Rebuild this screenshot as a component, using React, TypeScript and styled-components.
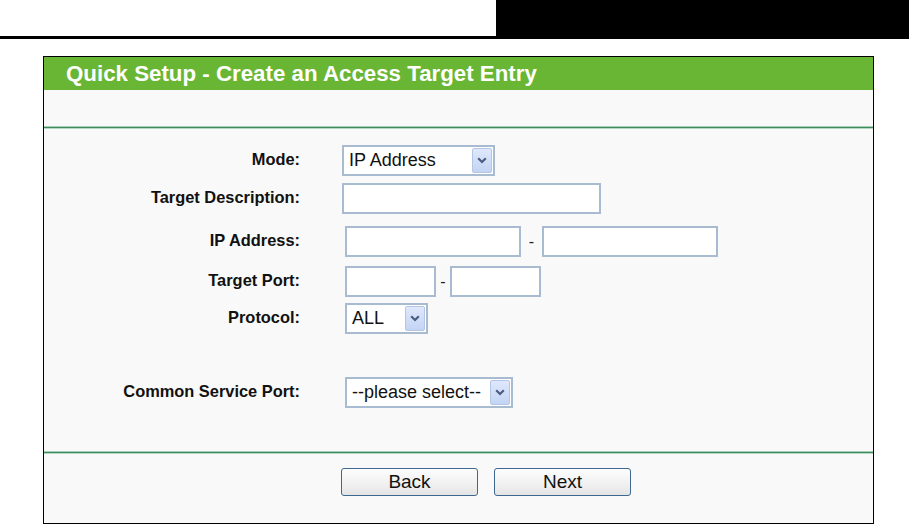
import React from "react";
import styled, { createGlobalStyle } from "styled-components";

const Global = createGlobalStyle`
  html, body { margin: 0; padding: 0; background: #ffffff; }
  body { font-family: "Liberation Sans", Arial, sans-serif; overflow: hidden; }
`;

const TopBar = styled.div`
  display: flex;
  height: 39px;
`;

const TopLeft = styled.div`
  width: 496px;
  height: 36px;
  border-bottom: 3px solid #000;
`;

const TopRight = styled.div`
  flex: 1;
  background: #000;
`;

const Panel = styled.div`
  margin: 17px 0 0 43px;
  width: 829px;
  height: 466px;
  border: 1px solid #000;
  background: #f9f9f9;
  display: flex;
  flex-direction: column;
`;

const TitleBar = styled.div`
  height: 33px;
  background: #69b634;
  color: #ffffff;
  font-weight: bold;
  font-size: 22.3px;
  line-height: 33px;
  padding-left: 22px;
  white-space: nowrap;
`;

const Spacer = styled.div`
  height: 36px;
`;

const Separator = styled.div`
  height: 3px;
  background: linear-gradient(#a6cfb6 0, #a6cfb6 1px, #3f8a5f 1px, #3f8a5f 2px, #b5d8c2 2px);
`;

const Form = styled.div`
  padding-top: 16px;
  height: 306px;
  display: flex;
  flex-direction: column;
`;

const Row = styled.div<{ $top: number }>`
  display: grid;
  grid-template-columns: 256px 1fr;
  column-gap: 42px;
  height: 31px;
  margin-top: ${(p) => p.$top}px;
  align-items: center;
`;

const Label = styled.div`
  text-align: right;
  font-weight: bold;
  font-size: 16.4px;
  color: #111;
  padding-bottom: 2px;
  white-space: nowrap;
`;

const Controls = styled.div<{ $inset?: number }>`
  display: flex;
  align-items: center;
  padding-left: ${(p) => p.$inset ?? 0}px;
  height: 31px;
`;

const TextBox = styled.div<{ $w: number }>`
  box-sizing: border-box;
  width: ${(p) => p.$w}px;
  height: 31px;
  border: 2px solid #a9bbd1;
  background: #ffffff;
`;

const Dash = styled.span<{ $w: number }>`
  width: ${(p) => p.$w}px;
  text-align: center;
  font-size: 16px;
  color: #222;
`;

const SelectBox = styled.div<{ $w: number }>`
  box-sizing: border-box;
  width: ${(p) => p.$w}px;
  height: 31px;
  border: 2px solid #a9bbd1;
  background: #ffffff;
  display: flex;
  align-items: center;
  justify-content: space-between;
  padding: 0 1px 0 5px;
  font-size: 18px;
  color: #111;
  white-space: nowrap;
`;

const DropButton = styled.div`
  box-sizing: border-box;
  flex: none;
  width: 20px;
  height: 25px;
  border: 1px solid #b4c6e6;
  border-radius: 2px;
  background: linear-gradient(#dfe8fb, #c3d4f4);
  display: flex;
  align-items: center;
  justify-content: center;
`;

const ButtonBar = styled.div`
  display: flex;
  gap: 16px;
  padding: 14px 0 0 297px;
`;

const Btn = styled.button`
  box-sizing: border-box;
  width: 137px;
  height: 28px;
  border: 1px solid #3e6890;
  border-radius: 3px;
  background: linear-gradient(#fdfdfd, #f0f0f0 60%, #e4e4e4);
  font-family: "Liberation Sans", Arial, sans-serif;
  font-size: 19px;
  line-height: 26px;
  color: #111;
  padding: 0;
`;

const Chevron = () => (
  <svg width="10" height="7" viewBox="0 0 10 7">
    <path d="M1.2 1.3 L5 5 L8.8 1.3" fill="none" stroke="#4b5d80" strokeWidth="2.2" />
  </svg>
);

const Select = ({ w, value }: { w: number; value: string }) => (
  <SelectBox $w={w}>
    <span>{value}</span>
    <DropButton>
      <Chevron />
    </DropButton>
  </SelectBox>
);

export default function App() {
  return (
    <>
      <Global />
      <TopBar>
        <TopLeft />
        <TopRight />
      </TopBar>
      <Panel>
        <TitleBar>Quick Setup - Create an Access Target Entry</TitleBar>
        <Spacer />
        <Separator />
        <Form>
          <Row $top={0}>
            <Label>Mode:</Label>
            <Controls>
              <Select w={153} value="IP Address" />
            </Controls>
          </Row>
          <Row $top={7}>
            <Label>Target Description:</Label>
            <Controls>
              <TextBox $w={259} />
            </Controls>
          </Row>
          <Row $top={12}>
            <Label>IP Address:</Label>
            <Controls $inset={3}>
              <TextBox $w={176} />
              <Dash $w={21}>-</Dash>
              <TextBox $w={176} />
            </Controls>
          </Row>
          <Row $top={9}>
            <Label>Target Port:</Label>
            <Controls $inset={3}>
              <TextBox $w={91} />
              <Dash $w={14}>-</Dash>
              <TextBox $w={91} />
            </Controls>
          </Row>
          <Row $top={6}>
            <Label>Protocol:</Label>
            <Controls $inset={3}>
              <Select w={83} value="ALL" />
            </Controls>
          </Row>
          <Row $top={43}>
            <Label>Common Service Port:</Label>
            <Controls $inset={3}>
              <Select w={168} value="--please select--" />
            </Controls>
          </Row>
        </Form>
        <Separator />
        <ButtonBar>
          <Btn>Back</Btn>
          <Btn>Next</Btn>
        </ButtonBar>
      </Panel>
    </>
  );
}
